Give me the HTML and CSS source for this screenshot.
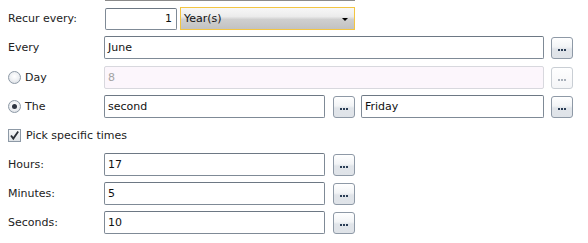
FILE: index.html
```html
<!DOCTYPE html>
<html>
<head>
<meta charset="utf-8">
<link rel="stylesheet" href="styles.css">
</head>
<body>
<div class="topline"></div>
<div class="form">
  <div class="row row-first">
    <div class="label">Recur every:</div>
    <div class="input num">1</div>
    <div class="select"><span>Year(s)</span><span class="arrow"></span></div>
  </div>
  <div class="row row-every">
    <div class="label">Every</div>
    <div class="input wide">June</div>
    <div class="btn"><span class="dots"></span></div>
  </div>
  <div class="row">
    <div class="label"><span class="radio"></span>Day</div>
    <div class="input wide disabled">8</div>
    <div class="btn disabled"><span class="dots"></span></div>
  </div>
  <div class="row">
    <div class="label"><span class="radio checked"></span>The</div>
    <div class="input mid">second</div>
    <div class="btn btn-mid"><span class="dots"></span></div>
    <div class="input right">Friday</div>
    <div class="btn"><span class="dots"></span></div>
  </div>
  <div class="row">
    <div class="label label-wide"><span class="check"><svg width="11" height="11" viewBox="0 0 11 11"><path d="M2 5.5 L4.3 8.6 L9.2 1.6" fill="none" stroke="#2b2f36" stroke-width="1.8"/></svg></span>Pick specific times</div>
  </div>
  <div class="row">
    <div class="label">Hours:</div>
    <div class="input mid">17</div>
    <div class="btn btn-mid"><span class="dots"></span></div>
  </div>
  <div class="row">
    <div class="label">Minutes:</div>
    <div class="input mid">5</div>
    <div class="btn btn-mid"><span class="dots"></span></div>
  </div>
  <div class="row">
    <div class="label">Seconds:</div>
    <div class="input mid">10</div>
    <div class="btn btn-mid"><span class="dots"></span></div>
  </div>
</div>
</body>
</html>
```

FILE: styles.css
```css
html, body {
  margin: 0;
  padding: 0;
  background: #ffffff;
}
body {
  font-family: "DejaVu Sans", Verdana, sans-serif;
  font-size: 11px;
  color: #222222;
  width: 588px;
  height: 243px;
  overflow: hidden;
  position: relative;
}
.topline {
  margin-left: 105px;
  width: 250px;
  height: 1px;
  background: #8a8a8a;
}
.form {
  display: flex;
  flex-direction: column;
  gap: 6px;
  padding: 6px 15px 0 8px;
}
.row {
  display: flex;
  align-items: center;
  height: 23px;
}
.row-every {
  margin-bottom: 1px;
}
.label {
  width: 96px;
  flex: none;
  display: flex;
  align-items: center;
  white-space: nowrap;
}
.label-wide {
  width: auto;
}
.input {
  box-sizing: border-box;
  height: 23px;
  border: 1px solid #7f8a96;
  border-top-color: #6d7884;
  border-radius: 2px;
  background: #fff;
  padding: 0 3px;
  line-height: 21px;
  flex: none;
  color: #111;
}
.num {
  width: 72px;
  height: 22px;
  line-height: 20px;
  text-align: right;
  margin-left: 1px;
  padding-right: 4px;
}
.select {
  box-sizing: border-box;
  margin-left: 3px;
  width: 175px;
  height: 23px;
  border: 1px solid #f3c542;
  background: linear-gradient(#f7f7f7 0%, #ececec 40%, #cfcfcf 55%, #c2c2c2 100%);
  display: flex;
  align-items: center;
  justify-content: space-between;
  padding: 0 6px 0 3px;
  color: #111;
}
.arrow {
  width: 0;
  height: 0;
  border-left: 3px solid transparent;
  border-right: 3px solid transparent;
  border-top: 3px solid #000;
  margin-top: 1px;
}
.wide { width: 440px; }
.mid { width: 221px; }
.right { width: 183px; margin-left: 6px; }
.disabled.input {
  background: #fcf6fc;
  border-color: #d8d8de;
  color: #a4a4a4;
}
.btn {
  box-sizing: border-box;
  width: 22px;
  height: 22px;
  margin-left: 7px;
  border: 1px solid #8e99a6;
  border-radius: 3px;
  background: linear-gradient(#ffffff 0%, #f2f4f6 45%, #e1e5ea 55%, #dfe3e8 100%);
  display: flex;
  align-items: center;
  justify-content: center;
  flex: none;
}
.btn-mid { margin-left: 8px; }
.dots {
  width: 2px;
  height: 2px;
  background: #2a3d55;
  box-shadow: 3px 0 0 #2a3d55, 6px 0 0 #2a3d55;
  margin-right: 6px;
  margin-top: 4px;
}
.btn.disabled {
  border-color: #c9ced4;
  background: linear-gradient(#ffffff, #f4f5f7);
}
.btn.disabled .dots {
  background: #a8b0ba;
  box-shadow: 3px 0 0 #a8b0ba, 6px 0 0 #a8b0ba;
}
.radio {
  box-sizing: border-box;
  width: 13px;
  height: 13px;
  border-radius: 50%;
  border: 1px solid #8d99a6;
  background: radial-gradient(circle at 50% 40%, #ffffff 0%, #eef0f3 50%, #d3d8de 100%);
  margin-right: 4px;
  display: flex;
  align-items: center;
  justify-content: center;
  flex: none;
}
.radio.checked::after {
  content: "";
  width: 5px;
  height: 5px;
  border-radius: 50%;
  background: #2d3440;
}
.check {
  box-sizing: border-box;
  width: 13px;
  height: 13px;
  border: 1px solid #8d99a6;
  background: linear-gradient(#f6f7f8, #dfe3e7);
  margin-right: 5px;
  display: flex;
  align-items: center;
  justify-content: center;
  flex: none;
}
.check svg { display: block; }
```
